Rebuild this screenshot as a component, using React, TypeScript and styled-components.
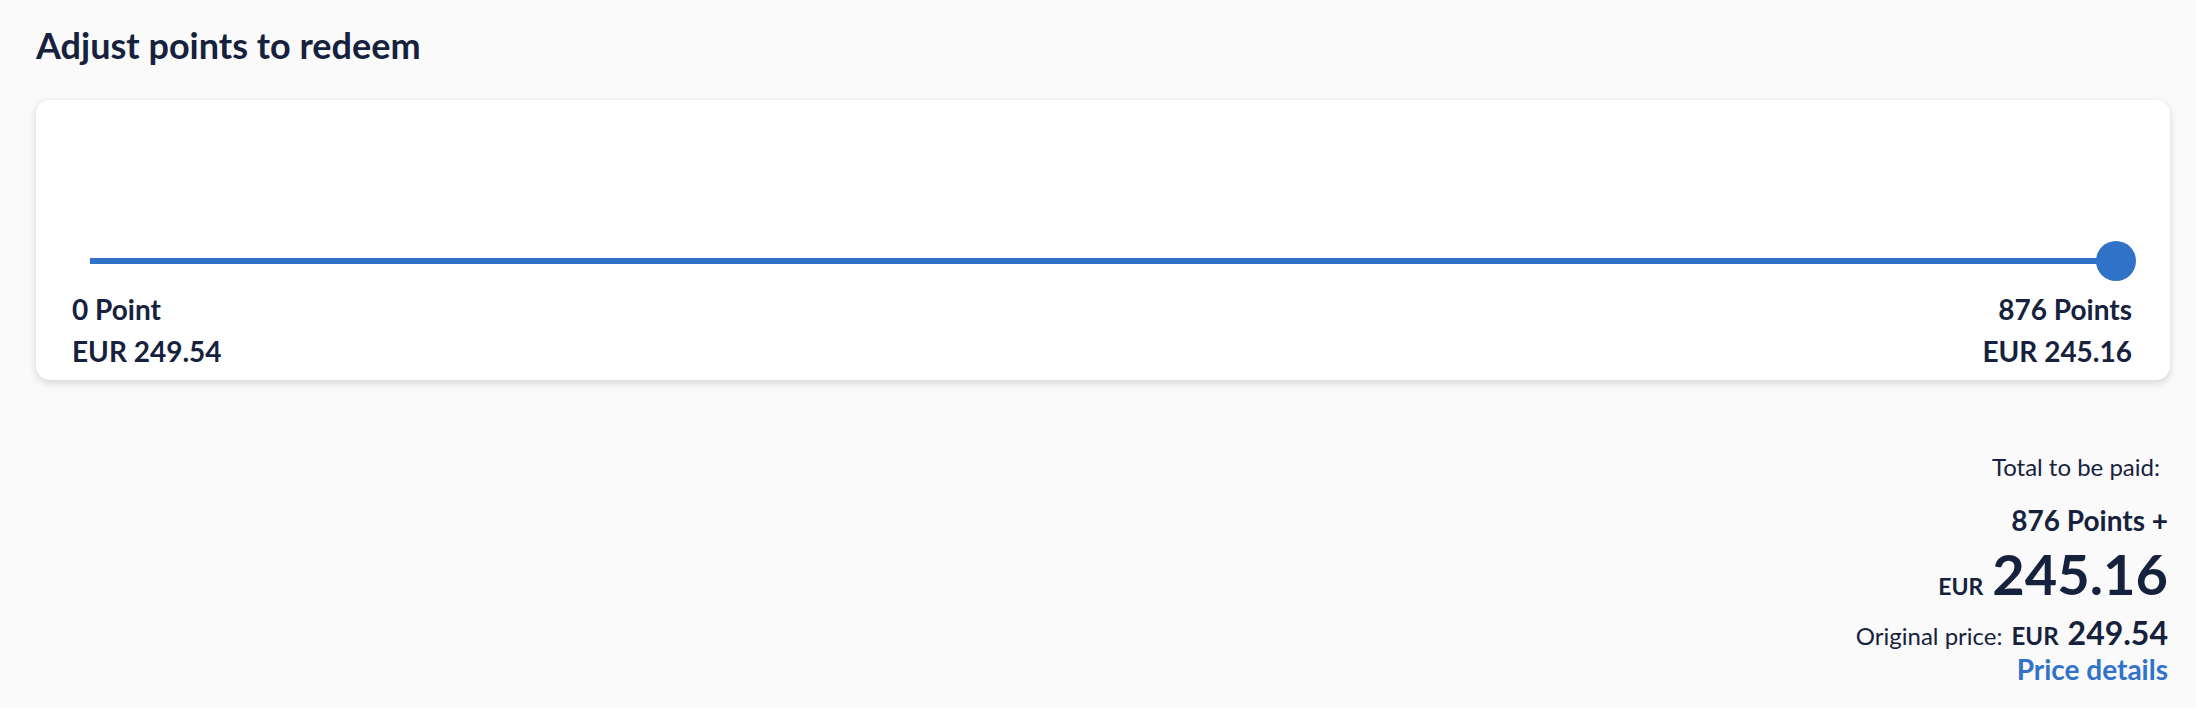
import React from "react";
import styled, { createGlobalStyle } from "styled-components";

const GlobalStyle = createGlobalStyle`
  html, body {
    margin: 0;
    padding: 0;
    background: #fafafa;
  }
  body {
    font-family: Lato, "Noto Sans", "Liberation Sans", sans-serif;
    color: #16223d;
  }
`;

const Page = styled.main`
  padding: 24px 26px 0 36px;
  min-height: 708px;
  box-sizing: border-box;
`;

const Title = styled.h1`
  margin: 0;
  font-size: 36px;
  line-height: 42px;
  font-weight: 700;
  color: #16223d;
`;

const Card = styled.section`
  margin-top: 34px;
  height: 280px;
  box-sizing: border-box;
  background: #ffffff;
  border-radius: 14px;
  box-shadow: 0 3px 8px rgba(0, 0, 0, 0.14), 0 0 2px rgba(0, 0, 0, 0.04);
  padding: 0 38px 0 36px;
  display: flex;
  flex-direction: column;
`;

const SliderRoot = styled.div`
  position: relative;
  height: 40px;
  margin: 141px 16px 7px 18px;
  display: flex;
  align-items: center;
`;

const Rail = styled.div`
  flex: 1;
  height: 6px;
  background: #2f72c8;
`;

const Thumb = styled.div`
  position: absolute;
  top: 0;
  width: 40px;
  height: 40px;
  border-radius: 50%;
  background: #2f72c8;
  transform: translateX(-50%);
`;

const Ends = styled.div`
  display: flex;
  justify-content: space-between;
`;

const EndLabel = styled.div<{ $align: "left" | "right" }>`
  display: flex;
  flex-direction: column;
  align-items: ${(p) => (p.$align === "left" ? "flex-start" : "flex-end")};
  font-size: 28px;
  line-height: 42px;
  font-weight: 700;
  color: #16223d;
`;

const Summary = styled.div`
  display: flex;
  flex-direction: column;
  align-items: flex-end;
  margin-top: 72px;
  padding-right: 2px;
`;

const TotalLabel = styled.div`
  font-size: 24px;
  line-height: 30px;
  font-weight: 400;
  padding-right: 8px;
`;

const PointsLine = styled.div`
  margin-top: 21px;
  font-size: 28px;
  line-height: 34px;
  font-weight: 700;
`;

const PriceRow = styled.div<{ $gap: number; $top: number }>`
  display: flex;
  align-items: baseline;
  gap: ${(p) => p.$gap}px;
  margin-top: ${(p) => p.$top}px;
`;

const Currency = styled.span<{ $size: number }>`
  font-size: ${(p) => p.$size}px;
  font-weight: 700;
`;

const BigAmount = styled.span`
  font-size: 56px;
  line-height: 60px;
  font-weight: 700;
`;

const OrigLabel = styled.span`
  font-size: 24px;
  font-weight: 400;
`;

const OrigAmount = styled.span`
  font-size: 32px;
  line-height: 38px;
  font-weight: 700;
`;

const DetailsLink = styled.a`
  font-size: 28px;
  line-height: 34px;
  font-weight: 700;
  color: #3073c8;
  text-decoration: none;
  cursor: pointer;
`;

export default function App() {
  const value = 876;
  const max = 876;
  const pos = (value / max) * 100;
  return (
    <>
      <GlobalStyle />
      <Page>
        <Title>Adjust points to redeem</Title>
        <Card>
          <SliderRoot>
            <Rail />
            <Thumb style={{ left: `${pos}%` }} />
          </SliderRoot>
          <Ends>
            <EndLabel $align="left">
              <span>0 Point</span>
              <span>EUR 249.54</span>
            </EndLabel>
            <EndLabel $align="right">
              <span>876 Points</span>
              <span>EUR 245.16</span>
            </EndLabel>
          </Ends>
        </Card>
        <Summary>
          <TotalLabel>Total to be paid:</TotalLabel>
          <PointsLine>876 Points +</PointsLine>
          <PriceRow $gap={9} $top={7}>
            <Currency $size={23}>EUR</Currency>
            <BigAmount>245.16</BigAmount>
          </PriceRow>
          <PriceRow $gap={9} $top={10}>
            <OrigLabel>Original price:</OrigLabel>
            <Currency $size={24}>EUR</Currency>
            <OrigAmount>249.54</OrigAmount>
          </PriceRow>
          <DetailsLink>Price details</DetailsLink>
        </Summary>
      </Page>
    </>
  );
}
